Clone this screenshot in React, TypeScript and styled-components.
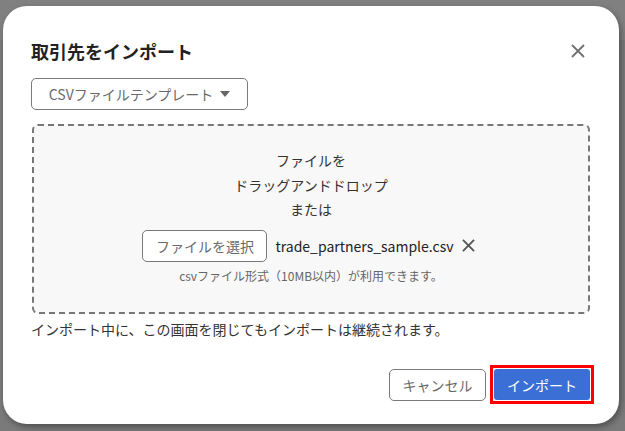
import React from 'react';
import styled, { createGlobalStyle } from 'styled-components';

const GlobalStyle = createGlobalStyle`
  html, body {
    margin: 0;
    padding: 0;
    width: 625px;
    height: 431px;
    overflow: hidden;
    font-family: "Noto Sans CJK JP", "Noto Sans", sans-serif;
  }
`;

const Backdrop = styled.div`
  width: 625px;
  height: 431px;
  background: #7a7a7a;
  display: flex;
  flex-direction: column;
  box-sizing: border-box;
  padding: 6px 6px 7px 3px;
  position: relative;
`;

const BackdropBand = styled.div`
  position: absolute;
  top: 0;
  left: 0;
  right: 0;
  height: 40px;
  background: #808080;
`;

const Dialog = styled.div`
  position: relative;
  flex: 1;
  background: #fff;
  border-radius: 24px;
  box-shadow: 2px 3px 6px rgba(0, 0, 0, 0.35);
  padding: 32px 28px 20px 28px;
  display: flex;
  flex-direction: column;
  box-sizing: border-box;
`;

const Header = styled.div`
  display: flex;
  align-items: center;
  justify-content: space-between;
  height: 26px;
`;

const Title = styled.h2`
  margin: 0;
  font-size: 18px;
  font-weight: 700;
  color: #222;
  line-height: 26px;
`;

const CloseButton = styled.button`
  border: none;
  background: none;
  padding: 0;
  margin-right: 4px;
  width: 18px;
  height: 18px;
  display: flex;
  align-items: center;
  justify-content: center;
  cursor: pointer;
`;

const OutlineButton = styled.button<{ $w?: number }>`
  box-sizing: border-box;
  height: 32px;
  ${(p) => (p.$w ? `width: ${p.$w}px;` : '')}
  padding: 0 12px;
  border: 1px solid #7a7a7a;
  border-radius: 5px;
  background: #fff;
  color: #6a6a6a;
  font-family: inherit;
  font-size: 14px;
  display: inline-flex;
  align-items: center;
  justify-content: center;
  gap: 7px;
  cursor: pointer;
`;

const TemplateRow = styled.div`
  margin-top: 14px;
  display: flex;
`;

const DropZone = styled.div`
  margin-top: 14px;
  margin-left: 1px;
  margin-right: 1px;
  height: 190px;
  box-sizing: border-box;
  border: 2px dashed #777;
  border-radius: 6px;
  background: #f8f8f8;
  display: flex;
  flex-direction: column;
  align-items: center;
  padding-top: 22px;
`;

const DropLine = styled.div`
  font-size: 14px;
  color: #333;
  line-height: 24.5px;
`;

const FileRow = styled.div`
  margin-top: 8px;
  display: flex;
  align-items: center;
  gap: 8px;
  margin-right: 5px;
`;

const FileName = styled.span`
  font-size: 14px;
  color: #222;
`;

const RemoveButton = styled.button`
  border: none;
  background: none;
  padding: 0;
  display: flex;
  align-items: center;
  cursor: pointer;
`;

const Hint = styled.div`
  margin-top: 5px;
  font-size: 12px;
  color: #666;
  line-height: 18px;
`;

const Note = styled.p`
  margin: 5px 0 0;
  font-size: 14px;
  color: #333;
  line-height: 20px;
`;

const Footer = styled.div`
  margin-top: auto;
  margin-right: -3px;
  display: flex;
  justify-content: flex-end;
  align-items: center;
  gap: 4px;
`;

const FocusRing = styled.span`
  display: inline-flex;
  border: 3px solid #f00;
  padding: 1px;
  background: #fff;
`;

const PrimaryButton = styled.button`
  box-sizing: border-box;
  height: 31px;
  width: 96px;
  border: none;
  border-radius: 3px;
  background: #3b6fd6;
  color: #fff;
  font-family: inherit;
  font-size: 14px;
  cursor: pointer;
`;

const XIcon = ({ size, color, w }: { size: number; color: string; w: number }) => (
  <svg width={size} height={size} viewBox="0 0 14 14">
    <path d="M1 1L13 13M13 1L1 13" stroke={color} strokeWidth={w} />
  </svg>
);

const Caret = () => (
  <svg width="10" height="6" viewBox="0 0 10 6">
    <path d="M0 0H10L5 6Z" fill="#666" />
  </svg>
);

export default function App() {
  return (
    <>
      <GlobalStyle />
      <Backdrop>
        <BackdropBand />
        <Dialog>
          <Header>
            <Title>取引先をインポート</Title>
            <CloseButton aria-label="閉じる">
              <XIcon size={14} color="#707070" w={1.8} />
            </CloseButton>
          </Header>
          <TemplateRow>
            <OutlineButton $w={217}>
              CSVファイルテンプレート
              <Caret />
            </OutlineButton>
          </TemplateRow>
          <DropZone>
            <DropLine>ファイルを</DropLine>
            <DropLine>ドラッグアンドドロップ</DropLine>
            <DropLine>または</DropLine>
            <FileRow>
              <OutlineButton $w={125}>ファイルを選択</OutlineButton>
              <FileName>trade_partners_sample.csv</FileName>
              <RemoveButton aria-label="削除">
                <XIcon size={13} color="#555" w={2} />
              </RemoveButton>
            </FileRow>
            <Hint>csvファイル形式（10MB以内）が利用できます。</Hint>
          </DropZone>
          <Note>インポート中に、この画面を閉じてもインポートは継続されます。</Note>
          <Footer>
            <OutlineButton $w={97}>キャンセル</OutlineButton>
            <FocusRing>
              <PrimaryButton>インポート</PrimaryButton>
            </FocusRing>
          </Footer>
        </Dialog>
      </Backdrop>
    </>
  );
}
